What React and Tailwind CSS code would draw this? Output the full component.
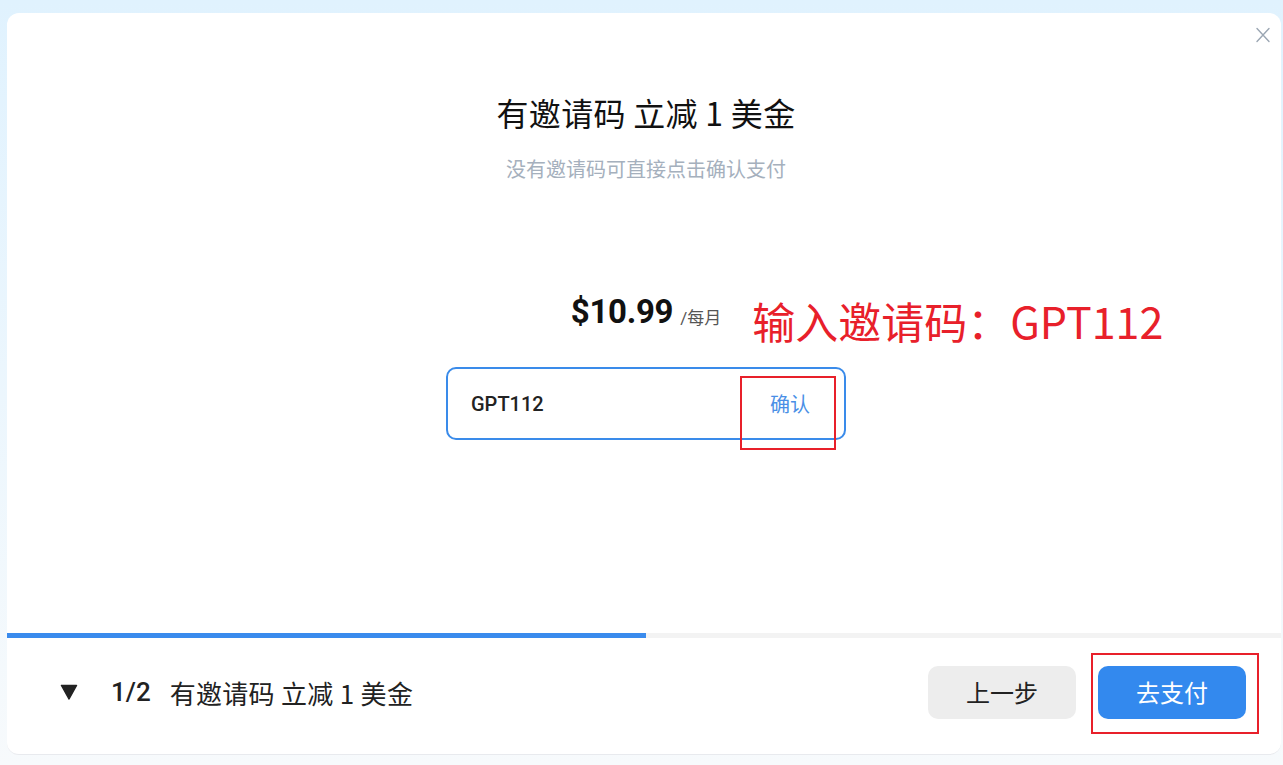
import React from "react";

const cjk = { fontFamily: '"Noto Sans CJK SC", "Noto Sans", sans-serif' };
const mixed = { fontFamily: 'Roboto, "Noto Sans CJK SC", sans-serif' };

export default function App() {
  return (
    <div className="w-[1283px] h-[765px] bg-gradient-to-b from-[#e0f2fe] to-[#f7fafc] pt-[13px] pl-[7px] pr-[2px] pb-[10px]" style={cjk}>
      <div className="relative h-full bg-white rounded-[12px] border-b border-[#e8eaee] flex flex-col overflow-hidden">
        <button className="absolute top-[14px] right-[10px] w-[16px] h-[16px] flex items-center justify-center">
          <svg width="16" height="16" viewBox="0 0 16 16" fill="none">
            <path d="M2 1.5 L14 14.5 M14 1.5 L2 14.5" stroke="#9ba6b3" strokeWidth="1.4" strokeLinecap="round" />
          </svg>
        </button>

        <div className="h-[620px] flex flex-col items-center pt-[79px] pl-[4px]">
          <h1 className="text-[32px] leading-[40px] text-[#111111] tracking-[0.3px]" style={cjk}>有邀请码 立减 1 美金</h1>
          <p className="mt-[23px] text-[20px] leading-[28px] text-[#a5b0bd]">没有邀请码可直接点击确认支付</p>

          <div className="relative mt-[109px] flex items-end h-[40px]">
            <span className="text-[33px] leading-[40px] font-bold text-[#111111] tracking-[-0.3px]" style={mixed}>$10.99</span>
            <span className="ml-[7px] mb-[4px] text-[17px] leading-[20px] text-[#555555]" style={mixed}>/每月</span>
            <span className="absolute left-full top-[3px] ml-[31px] whitespace-nowrap text-[43px] leading-[50px] text-[#e8202a]">输入邀请码：GPT112</span>
          </div>

          <div className="relative mt-[35px] w-[400px] h-[73px] border-2 border-[#3a8bea] rounded-[10px] flex items-center justify-between pl-[23px] pr-[34px]">
            <span className="text-[20px] font-medium text-[#222222]" style={mixed}>GPT112</span>
            <span className="text-[20px] text-[#4a8fe6]">确认</span>
            <div className="absolute left-[292px] top-[7px] w-[96px] h-[74px] border-2 border-[#e8202a]" />
          </div>
        </div>

        <div className="h-[5px] bg-[#f3f3f3] flex">
          <div className="w-[639px] h-full bg-[#3a8bed]" />
        </div>

        <div className="flex-1 flex items-center justify-between pl-[53px] pr-[35px] pb-[8px]">
          <div className="flex items-center">
            <svg width="18" height="16" viewBox="0 0 18 16">
              <path d="M1.5 1.5 H16.5 L9 15 Z" fill="#222222" stroke="#222222" strokeWidth="1.5" strokeLinejoin="round" />
            </svg>
            <span className="ml-[33px] text-[26px] font-medium text-[#222222]" style={mixed}>1/2</span>
            <span className="ml-[19px] text-[26px] text-[#222222] tracking-[0.3px]">有邀请码 立减 1 美金</span>
          </div>
          <div className="flex items-center gap-[22px]">
            <button className="w-[148px] h-[53px] rounded-[10px] bg-[#ededed] text-[24px] text-[#222222]">上一步</button>
            <div className="relative">
              <button className="w-[148px] h-[53px] rounded-[10px] bg-[#3389ee] text-[24px] text-white">去支付</button>
              <div className="absolute left-[-7px] top-[-13px] w-[168px] h-[81px] border-2 border-[#e8202a]" />
            </div>
          </div>
        </div>
      </div>
    </div>
  );
}
